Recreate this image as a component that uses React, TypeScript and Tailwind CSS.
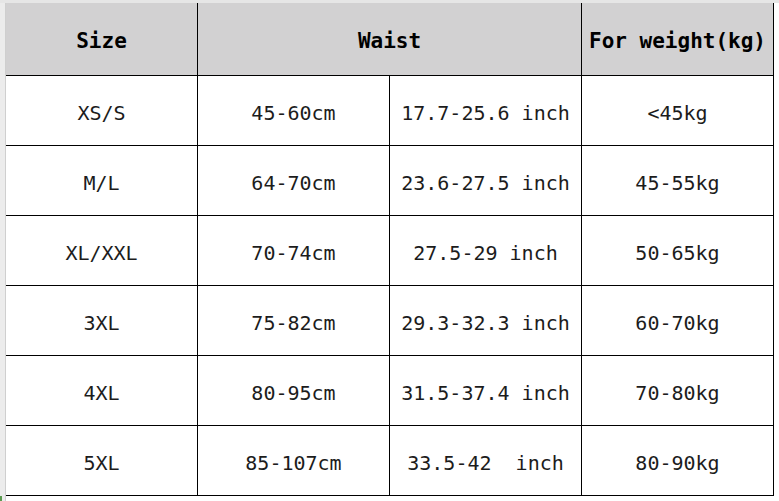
import React from 'react';

const rows = [
  { size: 'XS/S', cm: '45-60cm', inch: '17.7-25.6 inch', kg: '<45kg' },
  { size: 'M/L', cm: '64-70cm', inch: '23.6-27.5 inch', kg: '45-55kg' },
  { size: 'XL/XXL', cm: '70-74cm', inch: '27.5-29 inch', kg: '50-65kg' },
  { size: '3XL', cm: '75-82cm', inch: '29.3-32.3 inch', kg: '60-70kg' },
  { size: '4XL', cm: '80-95cm', inch: '31.5-37.4 inch', kg: '70-80kg' },
  { size: '5XL', cm: '85-107cm', inch: '33.5-42  inch', kg: '80-90kg' },
];

const headCell =
  "h-[73px] flex items-center justify-center pt-[5px] border-r border-b border-black bg-[#d2d1d2] font-['DejaVu_Sans_Mono',monospace] font-bold text-[21px] leading-none text-black";
const bodyCell =
  "h-[70px] flex items-center justify-center pt-1 border-r border-b border-black font-['DejaVu_Sans_Mono',monospace] text-[20px] leading-none text-[#1c1c1c] whitespace-pre";

const App: React.FC = () => {
  return (
    <div className="w-[779px] h-[501px] bg-white flex flex-col overflow-hidden">
      {/* spreadsheet top strip */}
      <div className="h-[3px] bg-[#e6e6e6] shrink-0" />
      <div className="flex flex-1">
        {/* spreadsheet left strip */}
        <div className="w-[6px] bg-[#ececec] border-r border-[#cfcfcf] shrink-0 flex flex-col justify-end">
          <div className="h-[5px] w-[2px] bg-[#5a9a4f]" />
        </div>

        <div className="flex flex-col">
          <div className="grid grid-cols-[192px_192px_192px_192px]">
            <div className={headCell}>Size</div>
            <div className={`${headCell} col-span-2`}>Waist</div>
            <div className={headCell}>For weight(kg)</div>

            {rows.map((r) => (
              <React.Fragment key={r.size}>
                <div className={bodyCell}>{r.size}</div>
                <div className={bodyCell}>{r.cm}</div>
                <div className={bodyCell}>{r.inch}</div>
                <div className={bodyCell}>{r.kg}</div>
              </React.Fragment>
            ))}
          </div>
        </div>
      </div>
    </div>
  );
};

export default App;
